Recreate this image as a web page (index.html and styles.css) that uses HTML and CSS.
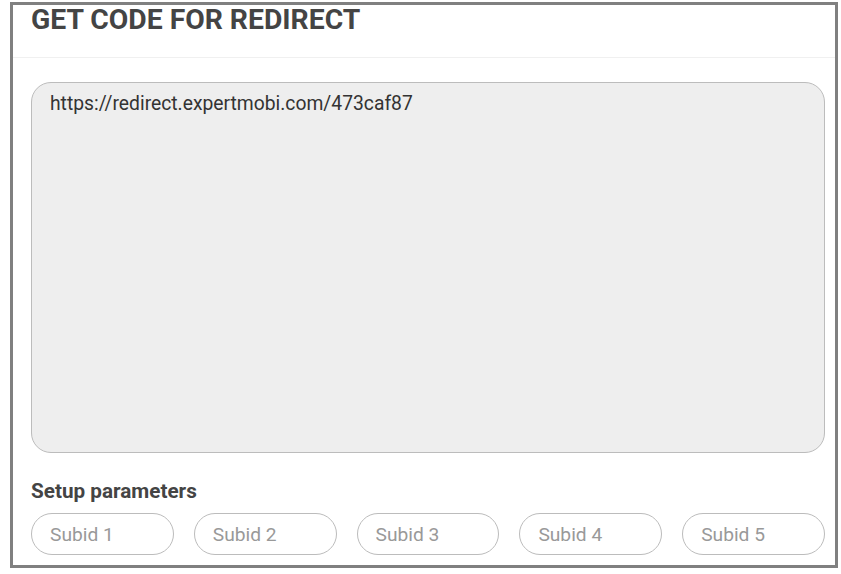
FILE: index.html
```html
<!DOCTYPE html>
<html lang="en">
<head>
  <meta charset="UTF-8">
  <meta name="viewport" content="width=device-width, initial-scale=1.0">
  <title>Get code for redirect</title>
  <link rel="stylesheet" href="styles.css">
</head>
<body>
  <div class="panel">
    <!-- Cabecera -->
    <div class="panel-header">
      <h1>GET CODE FOR REDIRECT</h1>
    </div>

    <div class="panel-body">
      <!-- Código del redirect -->
      <textarea class="code-box" readonly>https://redirect.expertmobi.com/473caf87</textarea>

      <!-- Parámetros -->
      <h2>Setup parameters</h2>
      <div class="params">
        <input class="param" type="text" placeholder="Subid 1">
        <input class="param" type="text" placeholder="Subid 2">
        <input class="param" type="text" placeholder="Subid 3">
        <input class="param" type="text" placeholder="Subid 4">
        <input class="param" type="text" placeholder="Subid 5">
      </div>
    </div>
  </div>
</body>
</html>
```

FILE: styles.css
```css
/* Estilos generales */
body {
  font-family: Roboto, "Liberation Sans", sans-serif;
  margin: 0;
  padding: 0;
  background: #fff;
}

.panel {
  width: 828px;
  height: 566px;
  margin: 2px 0 0 10px;
  border: 3px solid #808080;
  box-sizing: border-box;
}

/* Cabecera */
.panel-header {
  height: 52px;
  padding: 0 18px;
  border-bottom: 1px solid #f0f0f0;
}

h1 {
  margin: 0;
  padding-top: 1px;
  font-size: 28.3px;
  line-height: 28px;
  font-weight: 700;
  color: #444;
}

.panel-body {
  padding: 24px 10px 0 18px;
}

/* Caja del código */
.code-box {
  display: block;
  width: 100%;
  height: 371px;
  padding: 9px 18px;
  border: 1px solid #bcbcbc;
  border-radius: 20px;
  background-color: #eeeeee;
  font-family: inherit;
  font-size: 19.3px;
  color: #333;
  resize: none;
  box-sizing: border-box; /* Incluye el padding en el ancho */
  outline: none;
}

h2 {
  margin: 27px 0 11px;
  font-size: 20.7px;
  line-height: 22px;
  font-weight: 700;
  color: #444;
}

/* Parámetros */
.params {
  display: flex;
  gap: 20px;
}

.param {
  flex: 1;
  min-width: 0;
  height: 42px;
  padding: 0 18px;
  border: 1px solid #bcbcbc;
  border-radius: 21px;
  font-family: inherit;
  font-size: 19.2px;
  color: #333;
  box-sizing: border-box;
  outline: none;
}

.param::placeholder {
  color: #999;
}
```
